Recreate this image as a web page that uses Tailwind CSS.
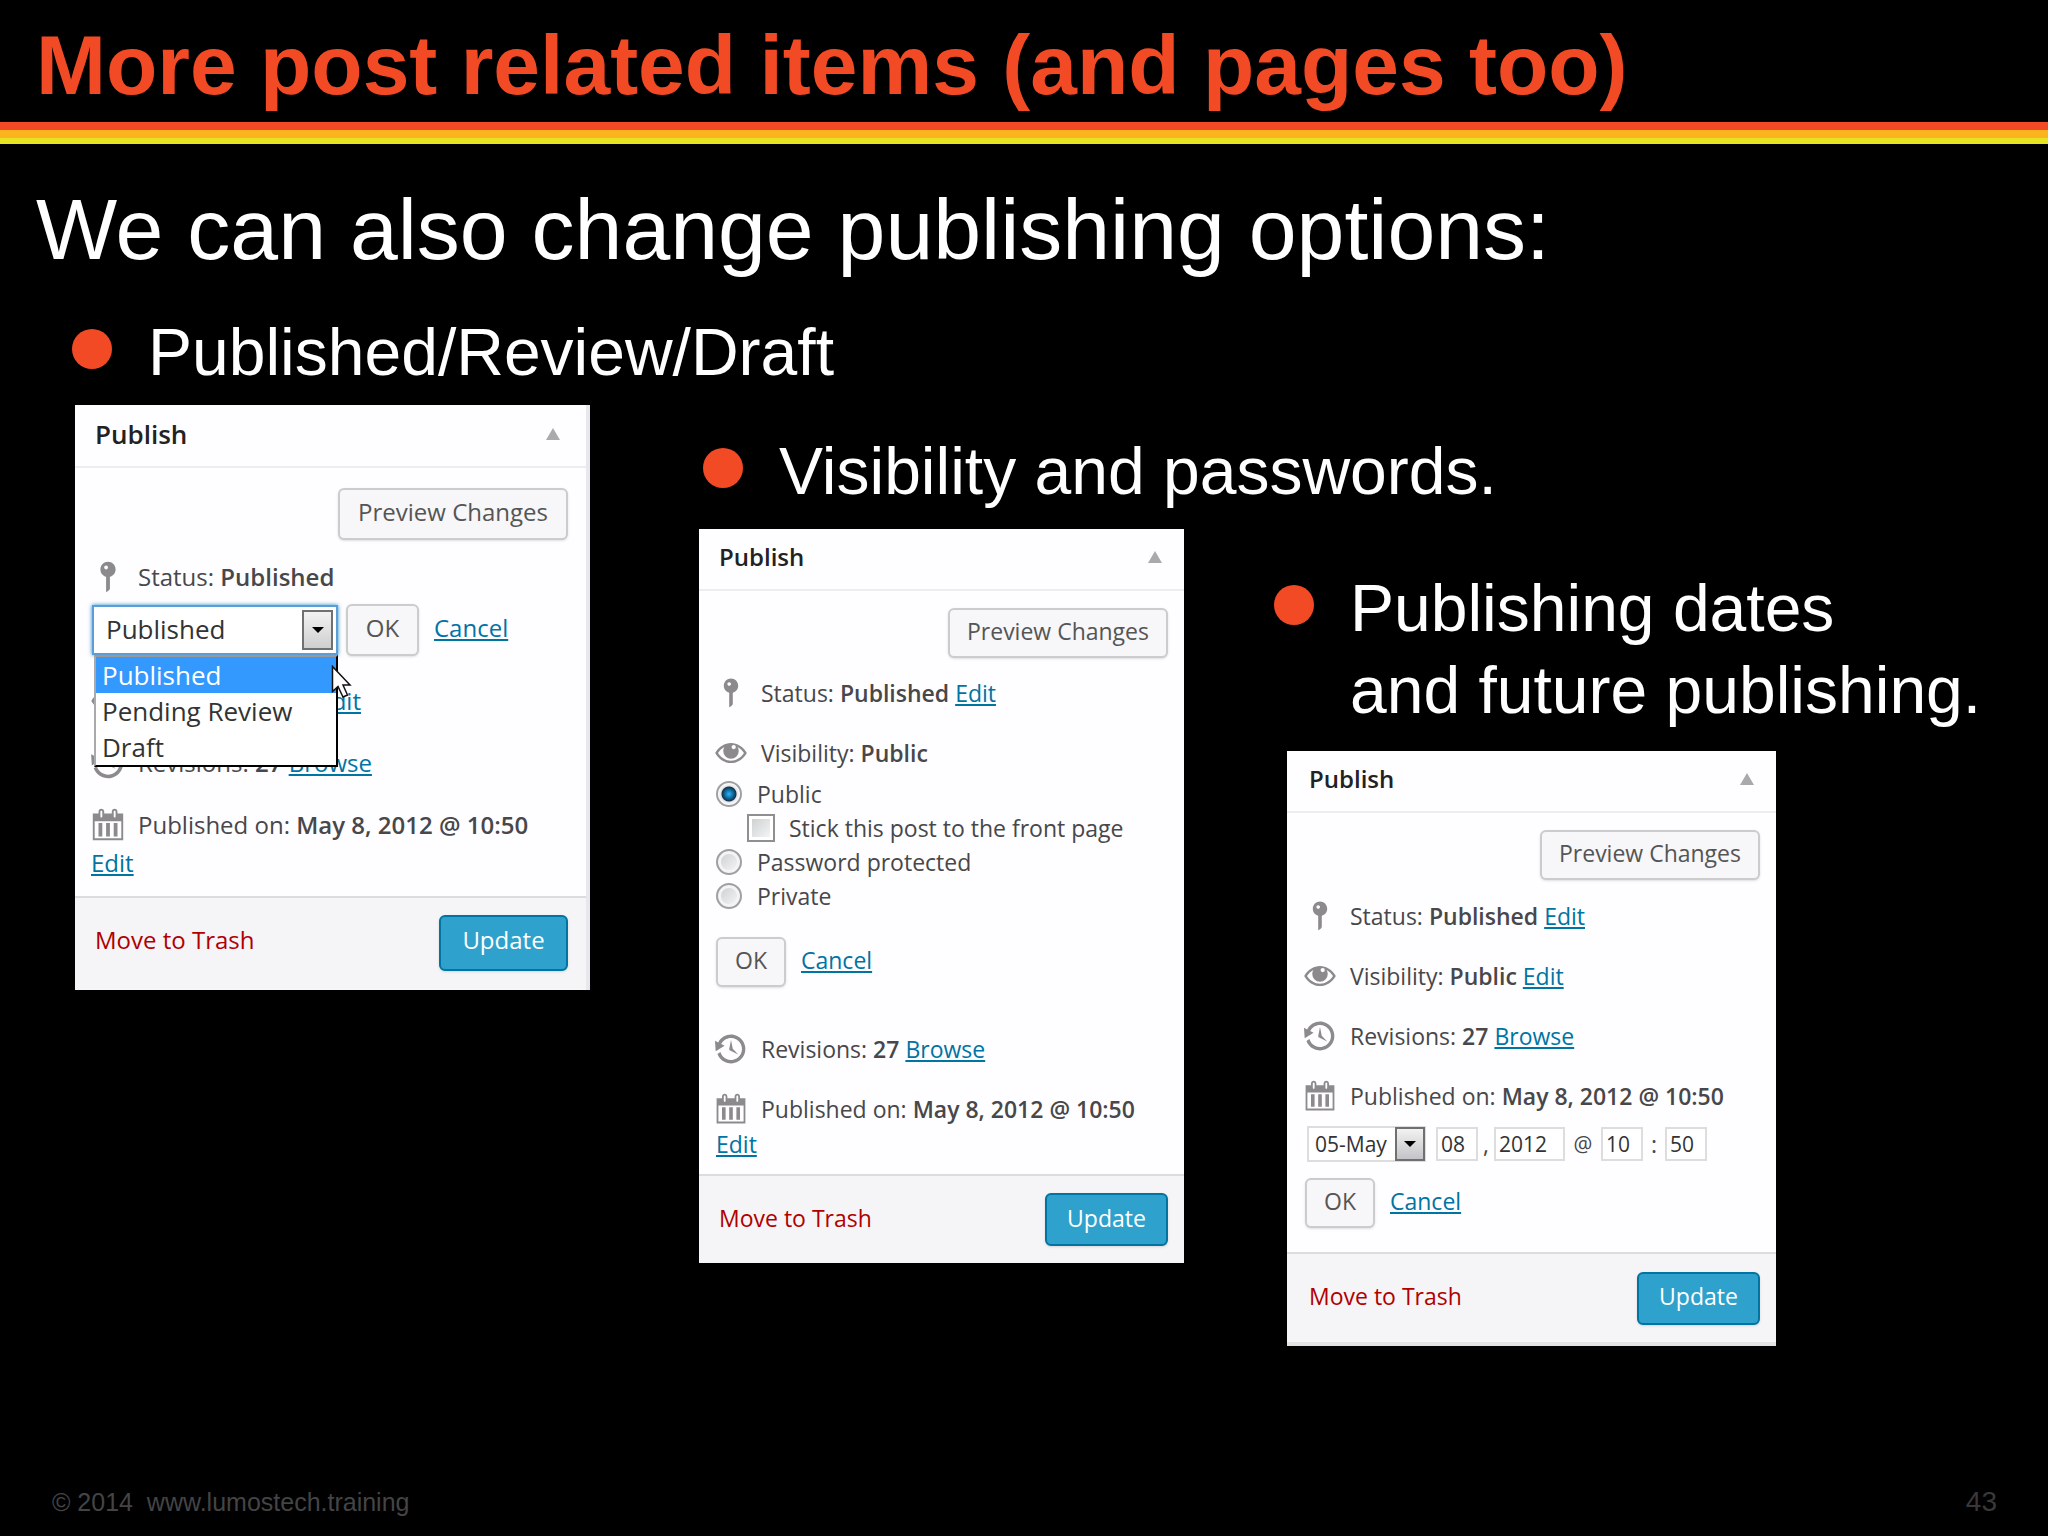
<!DOCTYPE html>
<html lang="en">
<head>
<meta charset="utf-8">
<meta name="viewport" content="width=device-width, initial-scale=1">
<title>More post related items (and pages too)</title>
<script src="https://cdn.jsdelivr.net/npm/@tailwindcss/browser@4"></script>
</head>
<body class="bg-black">
<svg class="hidden" aria-hidden="true">
  <symbol id="pin" viewBox="0 0 20 20"><path d="M14 6c0 1.86-1.28 3.41-3 3.86V16c0 1-2 2-2 2V9.86c-1.72-.45-3-2-3-3.86 0-2.21 1.79-4 4-4s4 1.79 4 4zM8 5c0 .55.45 1 1 1s1-.45 1-1-.45-1-1-1-1 .45-1 1z"/></symbol>
  <symbol id="eye" viewBox="0 0 20 20"><path fill-rule="evenodd" d="M1.2 10C3.2 6.500 6.500 4.400 10 4.400s6.800 2.100 8.800 5.600c-2 3.500-5.300 5.600-8.800 5.600S3.200 13.500 1.200 10zM2.800 10c1.700 2.600 4.300 4.300 7.200 4.300s5.500-1.700 7.200-4.300c-.9-1.400-2.100-2.500-3.500-3.300.4.700.6 1.400.6 2.200a4.300 4.300 0 0 1-8.600 0c0-.8.2-1.500.6-2.200C4.900 7.500 3.700 8.600 2.800 10zM10.300 6.700a1.200 1.200 0 1 0 2.400 0 1.200 1.200 0 1 0-2.400 0z"/></symbol>
  <symbol id="history" viewBox="0 0 20 20"><path d="M13.650 2.880c3.930 2.010 5.480 6.840 3.470 10.770s-6.830 5.480-10.770 3.470c-1.870-.96-3.200-2.560-3.860-4.400l1.640-1.030c.45 1.570 1.520 2.950 3.080 3.760 3.010 1.540 6.690.35 8.230-2.660 1.550-3.010.36-6.690-2.650-8.240C9.780 3.010 6.100 4.200 4.560 7.210l1.880.97-4.950 3.080-.39-5.820 1.780.91C4.900 2.400 9.750.89 13.650 2.880zm-4.360 7.830C9.110 10.530 9 10.280 9 10c0-.07.03-.12.04-.19h-.01L10 5l.97 4.810L14 13l-4.500-2.120.02-.02c-.08-.04-.16-.09-.23-.15z"/></symbol>
  <symbol id="calendar" viewBox="0 0 20 20"><path d="M15 4h3v14H2V4h3V3c0-.83.67-1.500 1.500-1.500S8 2.170 8 3v1h4V3c0-.83.67-1.500 1.500-1.500S15 2.170 15 3v1zM6 3v2.500c0 .28.22.5.5.5s.5-.22.5-.5V3c0-.28-.22-.5-.5-.5S6 2.720 6 3zm7 0v2.500c0 .28.22.5.5.5s.5-.22.5-.5V3c0-.28-.22-.5-.5-.5s-.5.22-.5.5zm4 14V8H3v9h14zM7 16V9H5v7h2zm4 0V9H9v7h2zm4 0V9h-2v7h2z"/></symbol>
  <symbol id="caret" viewBox="0 0 12 8"><path d="M0 1h12L6 7z"/></symbol>
  <symbol id="collapse" viewBox="0 0 14 12"><path d="M7 0l7 12H0z"/></symbol>
</svg>

<div class="flex min-h-screen flex-col overflow-x-hidden bg-black font-['Liberation_Sans',Arial,sans-serif] text-white">
  <header>
    <h1 class="flex h-[122px] items-center px-9 pt-2 text-[84px] leading-[100px] font-bold whitespace-nowrap text-[#f14a24]">More post related items (and pages too)</h1>
    <div class="h-2 bg-[#f14a24]"></div>
    <div class="h-2 bg-[#fbb31f]"></div>
    <div class="h-1.5 bg-[#e8e322]"></div>
  </header>

  <main class="pt-[35px]">
    <h2 class="px-9 text-[86px] leading-[100px] whitespace-nowrap">We can also change publishing options:</h2>

    <div class="mt-8 grid grid-cols-[minmax(0,627fr)_minmax(0,571fr)_minmax(0,778fr)] items-start pl-[72px]">
      <!-- Status -->
      <section>
        <div class="flex gap-9">
          <span class="mt-[18px] size-10 shrink-0 rounded-full bg-[#f14a24]"></span>
          <h3 class="text-[66px] leading-[82px] whitespace-nowrap">Published/Review/Draft</h3>
        </div>
        <article class="mt-3 ml-[3px] w-[515px] border-r-4 border-[#e9e7ee] bg-[#fefdff] font-['Open_Sans',sans-serif] text-[24px] leading-7 text-[#48474a]">
          <div class="flex h-[63px] items-center justify-between border-b-2 border-[#eeecf0] pr-[26px] pb-1 pl-5">
            <h4 class="text-[26px] font-semibold text-[#222]">Publish</h4>
            <svg class="h-3 w-3.5 fill-[#aaa]"><use href="#collapse"/></svg>
          </div>
          <div class="flex flex-col pt-5 pr-[18px] pl-3.5">
            <button class="h-[52px] self-end rounded-md border-2 border-[#ccc] bg-[#f7f6f8] px-[18px] pb-1 text-[#555] shadow-sm">Preview Changes</button>
            <div class="mt-[18px] flex h-[38px] items-center gap-[11px]"><svg class="size-[38px] fill-[#8c8a8c]"><use href="#pin"/></svg><p>Status: <b class="font-semibold">Published</b></p></div>
            <div class="mt-2 ml-[3px] flex h-[52px] items-center">
              <div class="relative w-[246px]">
                <select aria-label="Status" class="block h-[50px] w-full appearance-none border-2 border-[#5b9dd9] bg-white px-3 pb-0.5 text-[26px] text-[#333] shadow-[0_0_4px_#1e8cbe]"><option>Published</option><option>Pending Review</option><option>Draft</option></select>
                <span class="pointer-events-none absolute top-[5px] right-[5px] flex h-10 w-[31px] items-center justify-center border-2 border-[#707070] bg-linear-to-b from-[#f2f2f2] to-[#cfcfcf]"><svg class="h-2 w-3 fill-black"><use href="#caret"/></svg></span>
                <ul role="listbox" aria-label="Status options" class="absolute top-full left-0.5 z-10 w-[244px] border-2 border-t-2 border-black border-t-[#999] border-l-[#aaa] bg-white text-[26px] leading-9 text-[#333]">
                  <li role="option" aria-selected="true" class="bg-[#3399ff] px-1.5 text-white">Published</li>
                  <li role="option" class="px-1.5">Pending Review</li>
                  <li role="option" class="px-1.5">Draft</li>
                </ul>
                <svg class="absolute top-[60px] left-[239px] z-20 h-9 w-6" viewBox="0 0 24 36"><path d="M1.500 1.500v25l5.500-5 5 10.500 4.500-2-4.500-10h7z" fill="#fff" stroke="#111" stroke-width="1.500"/></svg>
              </div>
              <button class="ml-2 h-[52px] w-[73px] rounded-md border-2 border-[#ccc] bg-[#f7f6f8] pb-1 text-[#555] shadow-sm">OK</button>
              <a href="#" class="ml-[15px] pb-1 text-[#0074a2] underline">Cancel</a>
            </div>
            <div class="mt-[26px] flex h-[38px] items-center gap-[11px]"><svg class="size-[38px] fill-[#8c8a8c]"><use href="#eye"/></svg><p>Visibility: <b class="font-semibold">Public</b> <a href="#" class="text-[#0074a2] underline">Edit</a></p></div>
            <div class="mt-6 flex h-[38px] items-center gap-[11px]"><svg class="size-[38px] fill-[#8c8a8c]"><use href="#history"/></svg><p>Revisions: <b class="font-semibold">27</b> <a href="#" class="text-[#0074a2] underline">Browse</a></p></div>
            <div class="mt-6 flex h-[38px] items-center gap-[11px]"><svg class="size-[38px] fill-[#8c8a8c]"><use href="#calendar"/></svg><p class="whitespace-nowrap">Published on: <b class="font-semibold">May 8, 2012 @ 10:50</b></p></div>
            <a href="#" class="mt-[5px] ml-0.5 self-start text-[#0074a2] underline">Edit</a>
          </div>
          <div class="mt-[19px] flex h-[94px] items-center justify-between border-t-2 border-[#dddbe0] bg-[#f5f4f6] pr-[18px] pb-0.5 pl-5">
            <a href="#" class="pb-1.5 text-[#b00000]">Move to Trash</a>
            <button class="h-14 w-[129px] rounded-md border-2 border-[#0074a2] bg-[#2ea2cc] pb-1.5 text-white shadow-sm">Update</button>
          </div>
        </article>
      </section>

      <!-- Visibility -->
      <section class="pt-[119px]">
        <div class="flex gap-9">
          <span class="mt-[18px] ml-1 size-10 shrink-0 rounded-full bg-[#f14a24]"></span>
          <h3 class="text-[66px] leading-[82px] whitespace-nowrap">Visibility and passwords.</h3>
        </div>
        <article class="mt-[17px] w-[485px] bg-[#fefdff] font-['Open_Sans',sans-serif] text-[23px] leading-7 text-[#48474a]">
          <div class="flex h-[62px] items-center justify-between border-b-2 border-[#eeecf0] pr-[22px] pb-1 pl-5">
            <h4 class="text-[24px] font-semibold text-[#222]">Publish</h4>
            <svg class="h-3 w-3.5 fill-[#aaa]"><use href="#collapse"/></svg>
          </div>
          <div class="flex flex-col pt-[17px] pr-4 pl-3.5">
            <button class="h-[50px] self-end rounded-md border-2 border-[#ccc] bg-[#f7f6f8] px-[17px] pb-1 text-[#555] shadow-sm">Preview Changes</button>
            <div class="mt-[17px] flex h-9 items-center gap-3"><svg class="size-9 fill-[#8c8a8c]"><use href="#pin"/></svg><p>Status: <b class="font-semibold">Published</b> <a href="#" class="text-[#0074a2] underline">Edit</a></p></div>
            <div class="mt-6 flex h-9 items-center gap-3"><svg class="size-9 fill-[#8c8a8c]"><use href="#eye"/></svg><p>Visibility: <b class="font-semibold">Public</b></p></div>
            <fieldset class="mt-1.5 pl-[3px]">
              <label class="flex h-[34px] items-center gap-[15px]"><input type="radio" name="vis" checked class="size-[26px] appearance-none rounded-full border-2 border-[#a0a0a2] bg-[radial-gradient(circle,#35b4ea_0px,#0d6fa8_4px,#14324a_7px,#e4e4e8_8px,#ffffff_11px)]">Public</label>
              <label class="ml-[31px] flex h-[34px] items-center gap-[14px]"><input type="checkbox" class="size-7 appearance-none border-2 border-[#8f8f8f] bg-linear-to-br from-[#c9cbcd] to-[#fafafa] shadow-[inset_0_0_0_3px_#ffffff]">Stick this post to the front page</label>
              <label class="flex h-[34px] items-center gap-[15px]"><input type="radio" name="vis" class="size-[26px] appearance-none rounded-full border-2 border-[#a0a0a2] bg-linear-to-br from-[#c9cbcd] to-[#fafafa] shadow-[inset_0_0_0_3px_#f4f4f6]">Password protected</label>
              <label class="flex h-[34px] items-center gap-[15px]"><input type="radio" name="vis" class="size-[26px] appearance-none rounded-full border-2 border-[#a0a0a2] bg-linear-to-br from-[#c9cbcd] to-[#fafafa] shadow-[inset_0_0_0_3px_#f4f4f6]">Private</label>
            </fieldset>
            <div class="mt-6 ml-[3px] flex items-center">
              <button class="h-[50px] w-[70px] rounded-md border-2 border-[#ccc] bg-[#f7f6f8] pb-1 text-[#555] shadow-sm">OK</button>
              <a href="#" class="ml-[15px] pb-1 text-[#0074a2] underline">Cancel</a>
            </div>
            <div class="mt-11 flex h-9 items-center gap-3"><svg class="size-9 fill-[#8c8a8c]"><use href="#history"/></svg><p>Revisions: <b class="font-semibold">27</b> <a href="#" class="text-[#0074a2] underline">Browse</a></p></div>
            <div class="mt-6 flex h-9 items-center gap-3"><svg class="size-9 fill-[#8c8a8c]"><use href="#calendar"/></svg><p class="whitespace-nowrap">Published on: <b class="font-semibold">May 8, 2012 @ 10:50</b></p></div>
            <a href="#" class="mt-[3px] ml-[3px] self-start text-[#0074a2] underline">Edit</a>
          </div>
          <div class="mt-4 flex h-[89px] items-center justify-between border-t-2 border-[#dddbe0] bg-[#f5f4f6] pr-4 pl-5">
            <a href="#" class="pb-1 text-[#b00000]">Move to Trash</a>
            <button class="h-[53px] w-[123px] rounded-md border-2 border-[#0074a2] bg-[#2ea2cc] pb-1 text-white shadow-sm">Update</button>
          </div>
        </article>
      </section>

      <!-- Dates -->
      <section class="pt-[256px]">
        <div class="flex gap-9">
          <span class="mt-[18px] ml-1 size-10 shrink-0 rounded-full bg-[#f14a24]"></span>
          <h3 class="text-[66px] leading-[82px] whitespace-nowrap">Publishing dates<br>and future publishing.</h3>
        </div>
        <article class="mt-5 ml-[17px] w-[489px] border-b-4 border-[#e4e2e6] bg-[#fefdff] font-['Open_Sans',sans-serif] text-[23px] leading-7 text-[#48474a]">
          <div class="flex h-[62px] items-center justify-between border-b-2 border-[#eeecf0] pr-[22px] pb-1 pl-[22px]">
            <h4 class="text-[24px] font-semibold text-[#222]">Publish</h4>
            <svg class="h-3 w-3.5 fill-[#aaa]"><use href="#collapse"/></svg>
          </div>
          <div class="flex flex-col pt-[17px] pr-4 pl-[15px]">
            <button class="h-[50px] self-end rounded-md border-2 border-[#ccc] bg-[#f7f6f8] px-[17px] pb-1 text-[#555] shadow-sm">Preview Changes</button>
            <div class="mt-[18px] flex h-9 items-center gap-3"><svg class="size-9 fill-[#8c8a8c]"><use href="#pin"/></svg><p>Status: <b class="font-semibold">Published</b> <a href="#" class="text-[#0074a2] underline">Edit</a></p></div>
            <div class="mt-6 flex h-9 items-center gap-3"><svg class="size-9 fill-[#8c8a8c]"><use href="#eye"/></svg><p>Visibility: <b class="font-semibold">Public</b> <a href="#" class="text-[#0074a2] underline">Edit</a></p></div>
            <div class="mt-6 flex h-9 items-center gap-3"><svg class="size-9 fill-[#8c8a8c]"><use href="#history"/></svg><p>Revisions: <b class="font-semibold">27</b> <a href="#" class="text-[#0074a2] underline">Browse</a></p></div>
            <div class="mt-6 flex h-9 items-center gap-3"><svg class="size-9 fill-[#8c8a8c]"><use href="#calendar"/></svg><p class="whitespace-nowrap">Published on: <b class="font-semibold">May 8, 2012 @ 10:50</b></p></div>
            <div class="mt-3 ml-[5px] flex items-center">
              <div class="relative w-[119px]">
                <select aria-label="Month" class="block h-9 w-full appearance-none border-2 border-[#ddd] bg-white px-1.5 text-[21px] leading-7 text-[#333]"><option>05-May</option></select>
                <span class="pointer-events-none absolute top-px right-px flex h-[34px] w-[30px] items-center justify-center border-2 border-[#707070] bg-linear-to-b from-[#f2f2f2] to-[#c4c4c8]"><svg class="h-2 w-3 fill-black"><use href="#caret"/></svg></span>
              </div>
              <input aria-label="Day" value="08" class="ml-2.5 h-[34px] w-[42px] border-2 border-[#ddd] bg-white px-[3px] text-[21px] text-[#333]">
              <span class="w-4 text-center">,</span>
              <input aria-label="Year" value="2012" class="h-[34px] w-[71px] border-2 border-[#ddd] bg-white px-[3px] text-[21px] text-[#333]">
              <span class="w-9 text-center text-[21px]">@</span>
              <input aria-label="Hour" value="10" class="h-[34px] w-[42px] border-2 border-[#ddd] bg-white px-[3px] text-[21px] text-[#333]">
              <span class="w-[22px] text-center">:</span>
              <input aria-label="Minute" value="50" class="h-[34px] w-[42px] border-2 border-[#ddd] bg-white px-[3px] text-[21px] text-[#333]">
            </div>
            <div class="mt-4 ml-[3px] flex items-center">
              <button class="h-[50px] w-[70px] rounded-md border-2 border-[#ccc] bg-[#f7f6f8] pb-1 text-[#555] shadow-sm">OK</button>
              <a href="#" class="ml-[15px] pb-1 text-[#0074a2] underline">Cancel</a>
            </div>
          </div>
          <div class="mt-6 flex h-[90px] items-center justify-between border-t-2 border-[#dddbe0] bg-[#f5f4f6] pr-4 pl-[22px]">
            <a href="#" class="pb-1 text-[#b00000]">Move to Trash</a>
            <button class="h-[53px] w-[123px] rounded-md border-2 border-[#0074a2] bg-[#2ea2cc] pb-1 text-white shadow-sm">Update</button>
          </div>
        </article>
      </section>
    </div>
  </main>

  <footer class="mt-auto flex justify-between pr-[51px] pb-5 pl-[52px] text-[25px] leading-7 text-[#444446]">
    <p class="whitespace-pre">© 2014  www.lumostech.training</p>
    <p class="text-[28px] text-[#38383a]">43</p>
  </footer>
</div>
</body>
</html>
